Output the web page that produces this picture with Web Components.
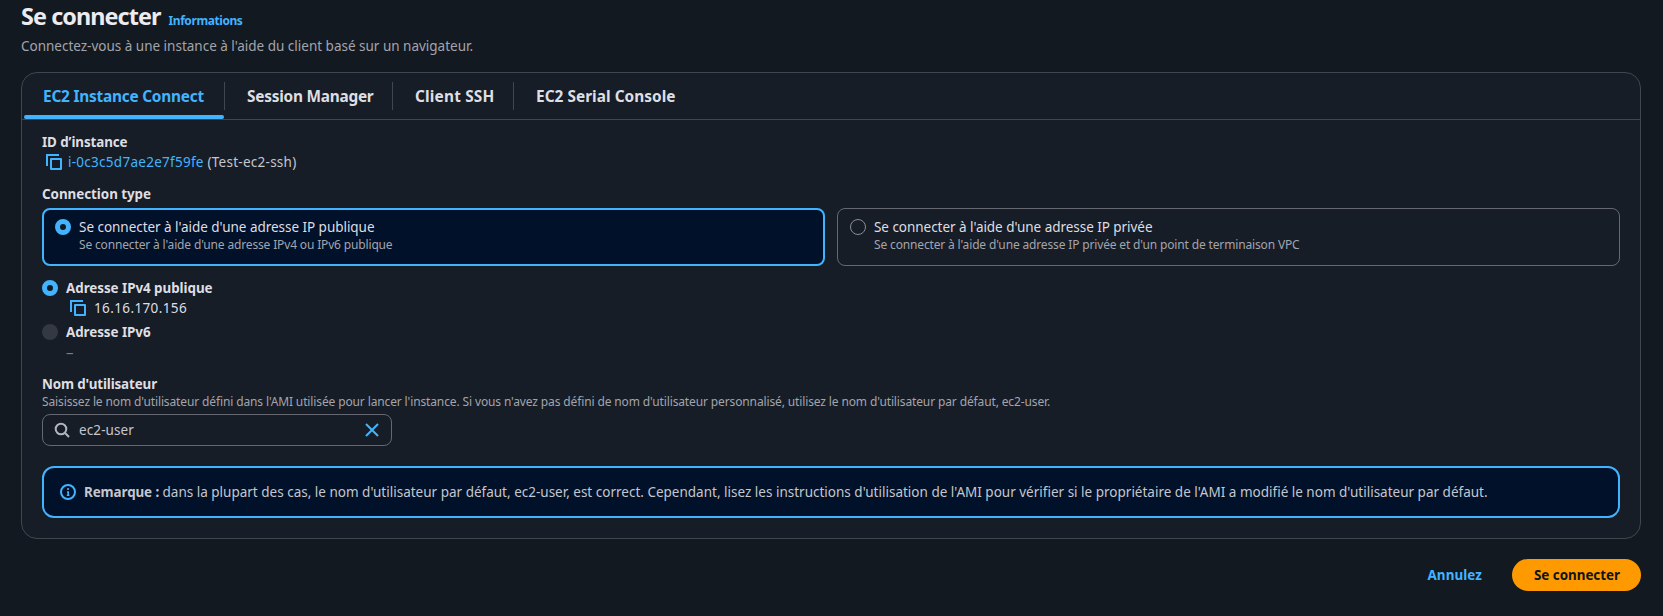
<!DOCTYPE html>
<html lang="fr">
<head>
<meta charset="utf-8">
<title>Se connecter</title>
<style>
html,body{margin:0;background:#131920;height:100%;overflow:hidden}
body{font-family:"Noto Sans","Open Sans",sans-serif;color:#dedee3}
</style>
</head>
<body>
<connect-page></connect-page>
<script>
const define = (name, html, setup) => {
  const tpl = document.createElement('template');
  tpl.innerHTML = html;
  customElements.define(name, class extends HTMLElement {
    constructor() {
      super();
      this.attachShadow({ mode: 'open' }).appendChild(tpl.content.cloneNode(true));
    }
    connectedCallback() { if (setup) setup(this, this.shadowRoot); }
  });
};

// One line of text, tracked so that it spans the width given in `w`.
define('ui-text', `<style>
  :host{display:block;white-space:pre;font-size:13.5px;line-height:20px;flex:none}
  :host([bold]){font-weight:700;font-size:13.4px}
  :host([small]){font-size:12px;line-height:16px}
  :host([tab]){font-size:15.4px;line-height:30px}
  :host([link]){color:#42b4ff}
  :host([muted]){color:#a4a4ad}
  span{display:inline-block}
</style><span><slot></slot></span>`, (el, root) => {
  const target = parseFloat(el.getAttribute('w'));
  if (!target) return;
  const span = root.querySelector('span');
  const n = el.textContent.length;
  const natural = span.getBoundingClientRect().width;
  span.style.letterSpacing = ((target - natural) / n).toFixed(3) + 'px';
  el.style.width = target + 'px';
});

define('ui-copy', `<style>:host{display:block;width:16px;height:16px;flex:none}svg{display:block}</style>
<svg width="16" height="16" viewBox="0 0 16 16" fill="none" stroke="#42b4ff" stroke-width="2"><path d="M15 5v10H5V5z" stroke-linejoin="round"/><path d="M13 1H1v11"/></svg>`);

define('ui-radio', `<style>
  :host{display:block;box-sizing:border-box;width:16px;height:16px;border-radius:50%;border:1px solid #8c8c94;flex:none}
  :host([checked]){border:5px solid #42b4ff;background:#131920}
  :host([disabled]){border:0;background:#333843}
</style>`);

define('ui-tab', `<style>
  :host{display:flex;box-sizing:border-box;height:46px;padding:9px 0 0 22px;position:relative;flex:none}
  :host([active]){padding-left:19px}
  .bar{position:absolute;left:0;right:1px;bottom:0;height:4px;border-radius:2px;background:#42b4ff;display:none}
  .sep{position:absolute;right:0;top:9px;width:1px;height:28px;background:#424650}
  :host([active]) .bar{display:block}
  :host([last]) .sep{display:none}
</style><slot></slot><i class="sep"></i><i class="bar"></i>`);

define('ui-tile', `<style>
  :host{display:flex;box-sizing:border-box;height:58px;border:1px solid #656871;border-radius:8px;padding:8px 12px;gap:8px;flex:1}
  :host([selected]){border:2px solid #42b4ff;background:#001129;padding:7px 11px}
  .t{display:flex;flex-direction:column}
</style><slot name="radio"></slot><div class="t"><slot></slot></div>`);

define('ui-input', `<style>
  :host{display:flex;box-sizing:border-box;width:350px;height:32px;border:1px solid #656871;border-radius:8px;padding:0 11px;align-items:center}
  .v{flex:1;padding-left:9px}
  svg{display:block;flex:none}
</style>
<svg width="16" height="16" viewBox="0 0 16 16" fill="none" stroke="#b4b4bb" stroke-width="2"><circle cx="7" cy="7" r="5.3"/><path d="M10.8 10.8 15 15"/></svg>
<div class="v"><slot></slot></div>
<svg width="16" height="16" viewBox="0 0 16 16" fill="none" stroke="#42b4ff" stroke-width="2"><path d="M2 2l12 12M14 2 2 14"/></svg>`);

define('ui-alert', `<style>
  :host{display:flex;box-sizing:border-box;height:52px;border:2px solid #42b4ff;border-radius:12px;background:#001129;padding:0 16px;align-items:center;color:#c6c6cd}
  svg{display:block;flex:none;margin-right:8px}
</style>
<svg width="16" height="16" viewBox="0 0 16 16" fill="none" stroke="#42b4ff" stroke-width="2"><circle cx="8" cy="8" r="7"/><path d="M8 4v2M7 8h1.2v3M6.8 11.2h2.6" stroke-width="1.6"/></svg>
<slot></slot>`);

define('ui-button', `<style>
  :host{display:flex;box-sizing:border-box;height:32px;border-radius:16px;align-items:center;padding:0 21px}
  :host([primary]){background:#ff9900;color:#0f141a;width:129px;padding-left:22px}
</style><slot></slot>`);

define('connect-page', `<style>
  :host{display:block;box-sizing:border-box;width:1663px;height:616px;padding:0 22px 0 21px;overflow:hidden}
  header{height:72px;box-sizing:border-box}
  .title{display:flex;align-items:baseline;gap:8px;height:36px}
  .title .h{font-size:23.4px;line-height:32px;color:#ebebf0}
  .panel{box-sizing:border-box;height:467px;border:1px solid #424650;border-radius:16px;background:#161d26}
  nav{display:flex;height:46px;border-bottom:1px solid #424650;padding-left:2px}
  .body{padding:12px 20px 0}
  .row{display:flex;align-items:center;height:20px}
  .tiles{display:flex;gap:12px;margin-top:4px}
  .opt{display:flex;gap:8px;align-items:center;height:22px}
  .sub{padding-left:24px}
  footer{display:flex;justify-content:flex-end;padding-top:20px;gap:9px}
</style>
<header>
  <div class="title"><ui-text class="h" bold w="139.5">Se connecter</ui-text><ui-text small bold link w="74">Informations</ui-text></div>
  <ui-text muted w="452">Connectez-vous à une instance à l'aide du client basé sur un navigateur.</ui-text>
</header>
<section class="panel">
  <nav>
    <ui-tab active style="width:201px"><ui-text bold tab link w="161">EC2 Instance Connect</ui-text></ui-tab>
    <ui-tab style="width:168px"><ui-text bold tab w="126.5">Session Manager</ui-text></ui-tab>
    <ui-tab style="width:121px"><ui-text bold tab w="79.5">Client SSH</ui-text></ui-tab>
    <ui-tab last><ui-text bold tab w="139.5">EC2 Serial Console</ui-text></ui-tab>
  </nav>
  <div class="body">
    <ui-text bold w="85.5">ID d’instance</ui-text>
    <div class="row"><ui-copy style="margin:0 6px 0 4px"></ui-copy><ui-text link w="139.5">i-0c3c5d7ae2e7f59fe </ui-text><ui-text w="89" style="color:#c6c6cd">(Test-ec2-ssh)</ui-text></div>
    <ui-text bold w="109" style="margin-top:12px">Connection type</ui-text>
    <div class="tiles">
      <ui-tile selected><ui-radio slot="radio" checked style="margin-top:2px"></ui-radio><ui-text w="295.5">Se connecter à l'aide d'une adresse IP publique</ui-text><ui-text small muted w="313.5">Se connecter à l'aide d'une adresse IPv4 ou IPv6 publique</ui-text></ui-tile>
      <ui-tile><ui-radio slot="radio" style="margin-top:2px"></ui-radio><ui-text w="278.5">Se connecter à l'aide d'une adresse IP privée</ui-text><ui-text small muted w="425.5">Se connecter à l'aide d'une adresse IP privée et d'un point de terminaison VPC</ui-text></ui-tile>
    </div>
    <div class="opt" style="margin-top:11px"><ui-radio checked></ui-radio><ui-text bold w="146.5">Adresse IPv4 publique</ui-text></div>
    <div class="row sub" style="margin-top:-1px"><ui-copy style="margin:0 8px 0 4px"></ui-copy><ui-text w="93">16.16.170.156</ui-text></div>
    <div class="opt" style="margin-top:3px"><ui-radio disabled></ui-radio><ui-text bold w="84.5">Adresse IPv6</ui-text></div>
    <div class="row sub"><ui-text w="7" style="color:#7a7d86;font-size:15px;line-height:18px;padding-bottom:2px">–</ui-text></div>
    <ui-text bold w="115" style="margin-top:11px">Nom d'utilisateur</ui-text>
    <ui-text small muted w="1008">Saisissez le nom d'utilisateur défini dans l'AMI utilisée pour lancer l'instance. Si vous n'avez pas défini de nom d'utilisateur personnalisé, utilisez le nom d'utilisateur par défaut, ec2-user.</ui-text>
    <ui-input style="margin-top:4px"><ui-text w="55" style="color:#c6c6cd">ec2-user</ui-text></ui-input>
    <ui-alert style="margin-top:20px"><ui-text bold w="78.5">Remarque : </ui-text><ui-text w="1325">dans la plupart des cas, le nom d'utilisateur par défaut, ec2-user, est correct. Cependant, lisez les instructions d'utilisation de l'AMI pour vérifier si le propriétaire de l'AMI a modifié le nom d'utilisateur par défaut.</ui-text></ui-alert>
  </div>
</section>
<footer>
  <ui-button><ui-text bold link w="54.5">Annulez</ui-text></ui-button>
  <ui-button primary><ui-text bold w="86">Se connecter</ui-text></ui-button>
</footer>`);
</script>
</body>
</html>
